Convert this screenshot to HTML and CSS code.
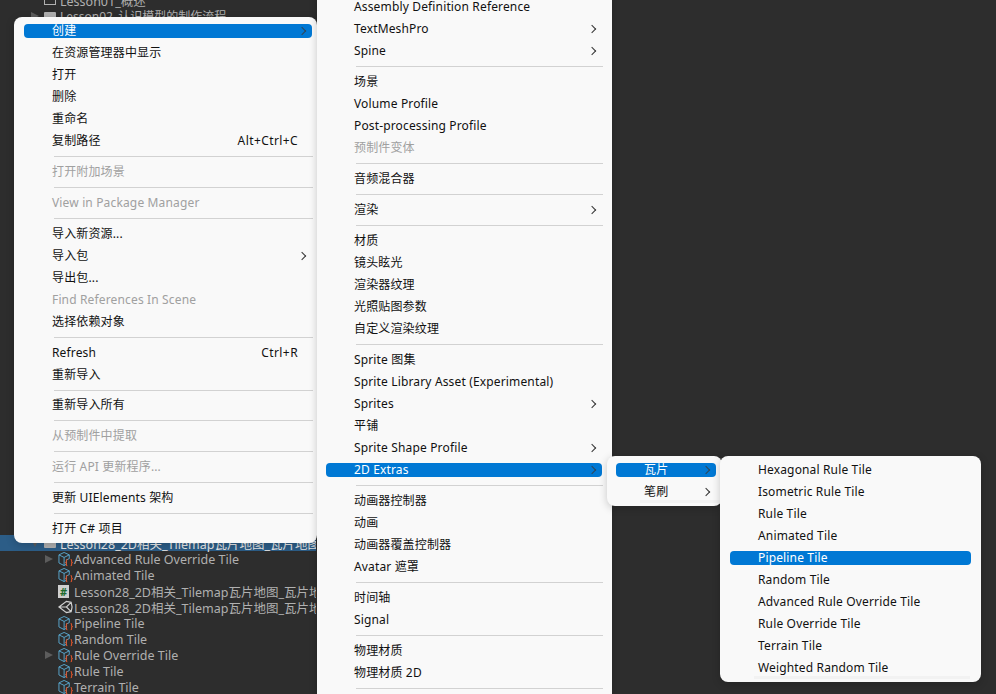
FILE: index.html
```html
<!DOCTYPE html>
<html lang="zh-CN">
<head>
  <meta charset="UTF-8">
  <title>Unity Project Context Menu</title>
  <link rel="stylesheet" href="styles.css">
</head>
<body>
  <svg class="defs" width="0" height="0">
    <symbol id="tile-icon" viewBox="0 0 16 16">
      <path d="M6.500 1 12 3.600v4L9 9v4.500L6.500 15 1 12.200V3.600Z M1 3.600 6.500 6.300 12 3.600 M6.500 6.300V15" fill="none" stroke="#5aa9d0" stroke-width="1"/>
      <path d="M10 8.500c-1.200 0-1 1-1 2.200 0 1-.4 1-.8 1.200.4.200.8.200.8 1.200 0 1.200-.2 2.200 1 2.200 M13.500 8.500c1.200 0 1 1 1 2.200 0 1 .4 1 .8 1.200-.4.200-.8.200-.8 1.200 0 1.200.2 2.200-1 2.200" fill="none" stroke="#e0562c" stroke-width="1.100"/>
    </symbol>
  </svg>

  <div class="tree tree-top">
    <div class="tree-row"><span class="indent"></span><span class="file-box"></span>Lesson01_概述</div>
    <div class="tree-row"><span class="arrow"></span><span class="folder"></span><span class="tight">Lesson02_认识模型的制作流程</span></div>
  </div>

  <div class="tree tree-bottom">
    <div class="tree-row selected"><span class="arrow-down"></span><span class="folder"></span>Lesson28_2D相关_Tilemap瓦片地图_瓦片地图</div>
    <div class="tree-row child"><span class="arrow"></span><svg class="tile"><use href="#tile-icon"/></svg>Advanced Rule Override Tile</div>
    <div class="tree-row child"><span class="indent"></span><svg class="tile"><use href="#tile-icon"/></svg>Animated Tile</div>
    <div class="tree-row child"><span class="indent"></span><span class="cs-icon">#</span>Lesson28_2D相关_Tilemap瓦片地图_瓦片地</div>
    <div class="tree-row child"><span class="indent"></span>
      <svg class="tile" viewBox="0 0 16 16"><path d="M1 8 9 2l5 1 1 5-1 5-5 1Z M1 8h8l5-5 M9 8l5 5 M9 2v1 M9 14v-1" fill="none" stroke="#d0d0d0" stroke-width="1.300"/></svg>Lesson28_2D相关_Tilemap瓦片地图_瓦片地</div>
    <div class="tree-row child"><span class="indent"></span><svg class="tile"><use href="#tile-icon"/></svg>Pipeline Tile</div>
    <div class="tree-row child"><span class="indent"></span><svg class="tile"><use href="#tile-icon"/></svg>Random Tile</div>
    <div class="tree-row child"><span class="arrow"></span><svg class="tile"><use href="#tile-icon"/></svg>Rule Override Tile</div>
    <div class="tree-row child"><span class="indent"></span><svg class="tile"><use href="#tile-icon"/></svg>Rule Tile</div>
    <div class="tree-row child"><span class="indent"></span><svg class="tile"><use href="#tile-icon"/></svg>Terrain Tile</div>
  </div>

  <div class="menu menu-main">
    <div class="item active sub">创建</div>
    <div class="item">在资源管理器中显示</div>
    <div class="item">打开</div>
    <div class="item">删除</div>
    <div class="item">重命名</div>
    <div class="item">复制路径<span class="shortcut">Alt+Ctrl+C</span></div>
    <div class="sep"></div>
    <div class="item off">打开附加场景</div>
    <div class="sep"></div>
    <div class="item off">View in Package Manager</div>
    <div class="sep"></div>
    <div class="item">导入新资源...</div>
    <div class="item sub">导入包</div>
    <div class="item">导出包...</div>
    <div class="item off">Find References In Scene</div>
    <div class="item">选择依赖对象</div>
    <div class="sep"></div>
    <div class="item">Refresh<span class="shortcut">Ctrl+R</span></div>
    <div class="item">重新导入</div>
    <div class="sep"></div>
    <div class="item">重新导入所有</div>
    <div class="sep"></div>
    <div class="item off">从预制件中提取</div>
    <div class="sep"></div>
    <div class="item off">运行 API 更新程序...</div>
    <div class="sep"></div>
    <div class="item">更新 UIElements 架构</div>
    <div class="sep"></div>
    <div class="item">打开 C# 项目</div>
  </div>

  <div class="menu menu-create">
    <div class="item">Assembly Definition Reference</div>
    <div class="item sub">TextMeshPro</div>
    <div class="item sub">Spine</div>
    <div class="sep"></div>
    <div class="item">场景</div>
    <div class="item">Volume Profile</div>
    <div class="item">Post-processing Profile</div>
    <div class="item off">预制件变体</div>
    <div class="sep"></div>
    <div class="item">音频混合器</div>
    <div class="sep"></div>
    <div class="item sub">渲染</div>
    <div class="sep"></div>
    <div class="item">材质</div>
    <div class="item">镜头眩光</div>
    <div class="item">渲染器纹理</div>
    <div class="item">光照贴图参数</div>
    <div class="item">自定义渲染纹理</div>
    <div class="sep"></div>
    <div class="item">Sprite 图集</div>
    <div class="item">Sprite Library Asset (Experimental)</div>
    <div class="item sub">Sprites</div>
    <div class="item">平铺</div>
    <div class="item sub">Sprite Shape Profile</div>
    <div class="item active sub">2D Extras</div>
    <div class="sep"></div>
    <div class="item">动画器控制器</div>
    <div class="item">动画</div>
    <div class="item">动画器覆盖控制器</div>
    <div class="item">Avatar 遮罩</div>
    <div class="sep"></div>
    <div class="item">时间轴</div>
    <div class="item">Signal</div>
    <div class="sep"></div>
    <div class="item">物理材质</div>
    <div class="item">物理材质 2D</div>
    <div class="sep"></div>
  </div>

  <div class="menu menu-extras">
    <div class="item active sub">瓦片</div>
    <div class="item sub">笔刷</div>
  </div>

  <div class="menu menu-tiles">
    <div class="item">Hexagonal Rule Tile</div>
    <div class="item">Isometric Rule Tile</div>
    <div class="item">Rule Tile</div>
    <div class="item">Animated Tile</div>
    <div class="item active">Pipeline Tile</div>
    <div class="item">Random Tile</div>
    <div class="item">Advanced Rule Override Tile</div>
    <div class="item">Rule Override Tile</div>
    <div class="item">Terrain Tile</div>
    <div class="item">Weighted Random Tile</div>
  </div>
</body>
</html>
```

FILE: styles.css
```css
html, body {
  margin: 0;
  height: 100%;
  overflow: hidden;
}

body {
  position: relative;
  background: #2d2d2d;
  font-family: "Noto Sans", "Noto Sans CJK SC", sans-serif;
}

.defs {
  position: absolute;
}

/* project tree behind the menus */
.tree {
  position: absolute;
  left: 0;
  width: 316px;
  overflow: hidden;
  color: #b0b0b0;
  font-size: 12.5px;
}

.tree-top {
  top: -8px;
}

.tree-bottom {
  top: 535px;
}

.tree-row {
  display: flex;
  align-items: center;
  height: 16px;
  padding-left: 31px;
  white-space: nowrap;
}

.tree-row.child {
  padding-left: 45px;
}

.tree-row.selected {
  background: #2c5d87;
  color: #e6e6e6;
}

.tight {
  font-size: 12px;
}

.arrow {
  flex: none;
  width: 0;
  height: 0;
  margin-right: 5px;
  border-left: 8px solid #5c5c5c;
  border-top: 4px solid transparent;
  border-bottom: 4px solid transparent;
}

.indent {
  width: 13px;
  flex: none;
}

.arrow-down {
  flex: none;
  width: 0;
  height: 0;
  margin-right: 5px;
  border-top: 8px solid #5c5c5c;
  border-left: 4px solid transparent;
  border-right: 4px solid transparent;
}

.folder {
  flex: none;
  width: 12px;
  height: 9px;
  margin-right: 4px;
  background: #b0b0b0;
  border-radius: 1px;
}

.file-box {
  flex: none;
  width: 10px;
  height: 7px;
  margin-right: 4px;
  border: 1px solid #b0b0b0;
}

.tile {
  width: 15px;
  height: 16px;
  margin-right: 1px;
  flex: none;
}

.cs-icon {
  flex: none;
  width: 11px;
  height: 13px;
  margin-right: 5px;
  background: #cfcfcf;
  color: #1e6b2e;
  font-size: 11px;
  font-weight: 700;
  line-height: 13px;
  text-align: center;
}

/* context menus */
.menu {
  position: absolute;
  display: flex;
  flex-direction: column;
  gap: 8px;
  padding: 7px 10px 7px 10px;
  box-sizing: border-box;
  background: #f9f9f9;
  border-radius: 8px;
  box-shadow: 0 2px 8px rgba(0, 0, 0, 0.2);
  color: #111;
  font-size: 12px;
  letter-spacing: 0.15px;
}

.menu-main {
  left: 14px;
  top: 17px;
  width: 303px;
  height: 526px;
  padding-right: 5px;
}

.menu-create {
  left: 317px;
  top: -7px;
  width: 295px;
  padding-left: 9px;
  border-radius: 0;
}

.menu-extras {
  left: 607px;
  top: 456px;
  width: 115px;
  height: 50px;
  padding-left: 9px;
  padding-right: 6px;
}

.menu-tiles {
  left: 720px;
  top: 456px;
  width: 261px;
  height: 226px;
}

/* faint strip left at the bottom of the small menus */
.menu-extras::after,
.menu-tiles::after {
  content: "";
  position: absolute;
  bottom: 3px;
  height: 3px;
  background: #f2f2f2;
}

.menu-extras::after {
  left: 33px;
  right: 0;
}

.menu-tiles::after {
  left: 34px;
  right: 11px;
}

.item {
  position: relative;
  display: flex;
  justify-content: space-between;
  height: 14px;
  padding-left: 28px;
  padding-right: 14px;
  border-radius: 4px;
  line-height: 14px;
  white-space: nowrap;
}

.item.active {
  background: #0078d4;
  color: #fff;
}

.item.off {
  color: #a0a0a0;
}

/* chevron for items that open a submenu */
.item.sub::after {
  content: "";
  position: absolute;
  right: 7px;
  top: 4px;
  width: 5px;
  height: 5px;
  border-top: 1px solid #333;
  border-right: 1px solid #333;
  transform: rotate(45deg);
}

.item.active.sub::after {
  border-color: #2f4658;
}

.sep {
  height: 1px;
  margin-left: 30px;
  margin-right: -1px;
  background: #d2d2d2;
}

.shortcut {
  letter-spacing: 0.4px;
}
```
